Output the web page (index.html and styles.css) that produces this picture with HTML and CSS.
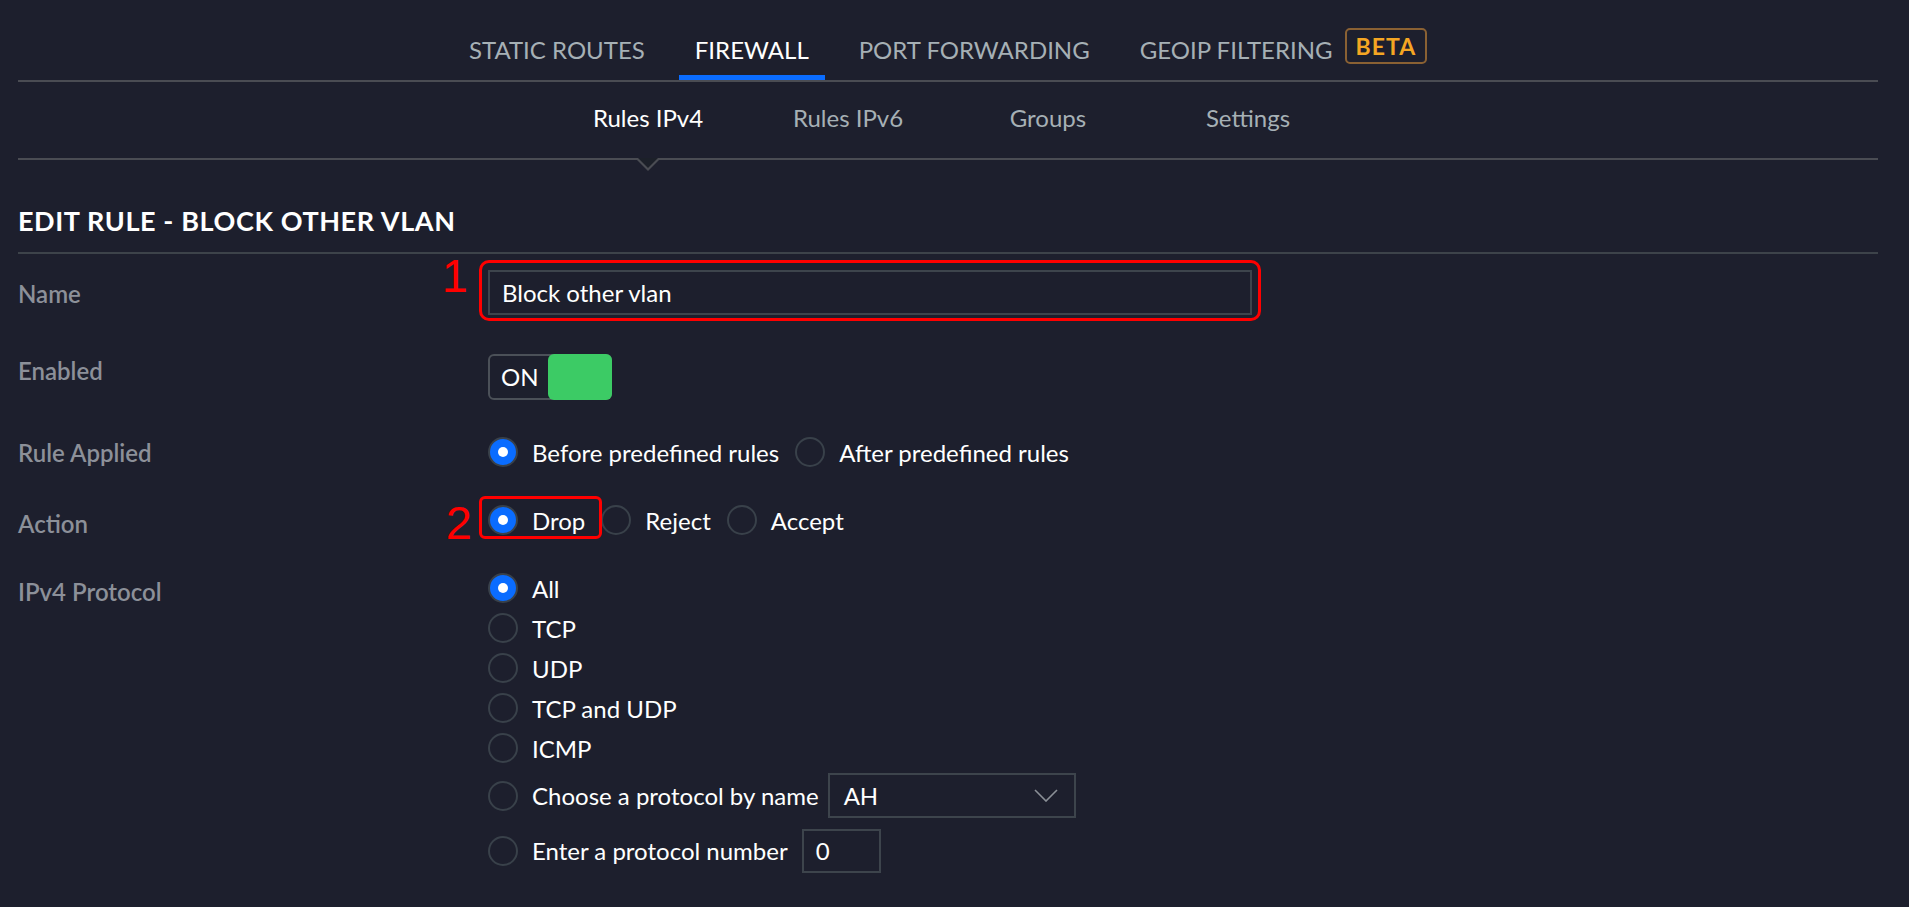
FILE: index.html
```html
<!DOCTYPE html>
<html lang="en">
<head>
  <meta charset="UTF-8">
  <title>Firewall - Edit rule</title>
  <link rel="stylesheet" href="styles.css">
</head>
<body>
  <div class="page">

    <!-- top tabs -->
    <nav class="tabs">
      <div class="tab">STATIC ROUTES</div>
      <div class="tab active">FIREWALL</div>
      <div class="tab">PORT FORWARDING</div>
      <div class="tab">GEOIP FILTERING <span class="beta">BETA</span></div>
    </nav>

    <!-- sub tabs -->
    <nav class="subtabs">
      <div class="subtab active">Rules IPv4</div>
      <div class="subtab">Rules IPv6</div>
      <div class="subtab">Groups</div>
      <div class="subtab">Settings</div>
    </nav>

    <h2 class="title">EDIT RULE - BLOCK OTHER VLAN</h2>

    <div class="form">
      <div class="row row-name">
        <div class="label">Name</div>
        <div class="mark mark-input">
          <span class="mark-num num-1">1</span>
          <div class="textbox">Block other vlan</div>
        </div>
      </div>

      <div class="row row-enabled">
        <div class="label">Enabled</div>
        <div class="toggle">
          <span class="toggle-text">ON</span>
          <span class="toggle-knob"></span>
        </div>
      </div>

      <div class="row row-applied">
        <div class="label">Rule Applied</div>
        <div class="options-inline">
          <div class="option"><span class="radio on"></span>Before predefined rules</div>
          <div class="option"><span class="radio"></span>After predefined rules</div>
        </div>
      </div>

      <div class="row row-action">
        <div class="label">Action</div>
        <div class="options-inline">
          <div class="option mark mark-drop">
            <span class="mark-num num-2">2</span>
            <span class="radio on"></span>Drop
          </div>
          <div class="option"><span class="radio"></span>Reject</div>
          <div class="option"><span class="radio"></span>Accept</div>
        </div>
      </div>

      <div class="row row-protocol">
        <div class="label">IPv4 Protocol</div>
        <div class="options">
          <div class="option"><span class="radio on"></span>All</div>
          <div class="option"><span class="radio"></span>TCP</div>
          <div class="option"><span class="radio"></span>UDP</div>
          <div class="option"><span class="radio"></span>TCP and UDP</div>
          <div class="option"><span class="radio"></span>ICMP</div>
          <div class="option option-tall">
            <span class="radio"></span>Choose a protocol by name
            <div class="select">
              <span>AH</span>
              <svg width="24" height="13" viewBox="0 0 24 13"><path d="M1 1 L12 12 L23 1" fill="none" stroke="#8b9097" stroke-width="1.6"/></svg>
            </div>
          </div>
          <div class="option option-tall">
            <span class="radio"></span>Enter a protocol number
            <div class="number">0</div>
          </div>
        </div>
      </div>
    </div>

  </div>
</body>
</html>
```

FILE: styles.css
```css
body {
  margin: 0;
  background-color: #1d1f2d;
  font-family: Lato, "Open Sans", sans-serif;
  color: #ffffff;
}

.page {
  padding: 0 31px 0 18px;
}

/* top tabs */
.tabs {
  display: flex;
  justify-content: center;
  gap: 18px;
  border-bottom: 2px solid #4a4c53;
}

.tab {
  display: flex;
  align-items: center;
  padding: 36px 16px 11px;
  line-height: 28px;
  font-size: 24px;
  color: #a6b0b5;
  border-bottom: 5px solid transparent;
}

.tab.active {
  color: #ffffff;
  border-bottom-color: #0a6cff;
}

.beta {
  display: flex;
  align-items: center;
  box-sizing: border-box;
  height: 36px;
  margin: -12px 0 -4px 12px;
  padding: 0 9px;
  border: 2px solid #8a6133;
  border-radius: 5px;
  font-size: 23px;
  font-weight: 700;
  letter-spacing: 1px;
  color: #f5a623;
}

/* sub tabs */
.subtabs {
  display: flex;
  justify-content: center;
  border-bottom: 2px solid #4a4c53;
}

.subtab {
  position: relative;
  width: 200px;
  padding: 22px 0 26px;
  line-height: 28px;
  font-size: 24px;
  text-align: center;
  color: #a6b0b5;
}

.subtab.active {
  color: #ffffff;
}

.subtab.active::before,
.subtab.active::after {
  content: "";
  position: absolute;
  top: 100%;
  left: 50%;
  width: 0;
  height: 0;
}

.subtab.active::before {
  margin-left: -13px;
  border-left: 13px solid transparent;
  border-right: 13px solid transparent;
  border-top: 13px solid #4a4c53;
}

.subtab.active::after {
  margin-left: -10px;
  border-left: 10px solid transparent;
  border-right: 10px solid transparent;
  border-top: 10px solid #1c2029;
}

/* heading */
.title {
  margin: 46px 0 0;
  padding-bottom: 16px;
  font-size: 27px;
  font-weight: 700;
  line-height: 30px;
  letter-spacing: 0.6px;
  border-bottom: 2px solid #3d434a;
}

/* form */
.row {
  display: flex;
  align-items: flex-start;
}

.label {
  width: 470px;
  flex-shrink: 0;
  line-height: 30px;
  font-size: 24px;
  font-weight: 600;
  color: #8c9099;
}

.row-name { padding-top: 16px; }
.row-name .label { margin-top: 9px; }

.row-enabled { margin-top: 39px; }
.row-enabled .label { margin-top: 2px; }

.row-applied { margin-top: 37px; }
.row-applied .label { margin-top: 1px; }

.row-action { margin-top: 37px; }
.row-action .label { margin-top: 4px; }

.row-protocol { margin-top: 34px; }
.row-protocol .label { margin-top: 4px; }

.textbox {
  box-sizing: border-box;
  width: 764px;
  height: 45px;
  padding-left: 12px;
  border: 2px solid #3d444c;
  display: flex;
  align-items: center;
  font-size: 24px;
}

.toggle {
  display: flex;
  box-sizing: border-box;
  width: 124px;
  height: 46px;
  border: 2px solid #4b5058;
  border-radius: 6px;
}

.toggle-text {
  flex: 1;
  padding-left: 11px;
  line-height: 42px;
  font-size: 24px;
}

.toggle-knob {
  width: 64px;
  margin: -2px -2px -2px 0;
  background-color: #3ccb65;
  border-radius: 6px;
}

.options {
  display: flex;
  flex-direction: column;
  gap: 10px;
}

.options-inline {
  display: flex;
  gap: 16px;
}

.option {
  display: flex;
  align-items: center;
  height: 30px;
  font-size: 24px;
}

.option-tall {
  height: 45px;
}

.radio {
  display: flex;
  justify-content: center;
  align-items: center;
  box-sizing: border-box;
  width: 30px;
  height: 30px;
  margin-right: 14px;
  border: 2px solid #39414a;
  border-radius: 50%;
}

.radio.on {
  background-color: #0a6cff;
}

.radio.on::after {
  content: "";
  width: 10px;
  height: 10px;
  border-radius: 50%;
  background: #ffffff;
}

.select {
  display: flex;
  justify-content: space-between;
  align-items: center;
  box-sizing: border-box;
  width: 248px;
  height: 45px;
  margin-left: 9px;
  padding: 0 16px 0 14px;
  border: 2px solid #3d444c;
}

.number {
  display: flex;
  align-items: center;
  box-sizing: border-box;
  width: 79px;
  height: 44px;
  margin-left: 14px;
  padding-left: 12px;
  border: 2px solid #3d444c;
}

/* red annotations */
.mark {
  position: relative;
}

.mark::after {
  content: "";
  position: absolute;
  border: 3px solid #ff0000;
  border-radius: 10px;
}

.mark-input::after {
  top: -10px;
  left: -9px;
  right: -9px;
  bottom: -6px;
}

.mark-drop::after {
  top: -9px;
  left: -9px;
  right: -17px;
  bottom: -4px;
  border-radius: 6px;
}

.mark-num {
  position: absolute;
  font-family: "Liberation Sans", Arial, sans-serif;
  font-size: 47px;
  line-height: 47px;
  color: #ff0000;
}

.num-1 {
  top: -18px;
  right: calc(100% + 20px);
}

.num-2 {
  top: -6px;
  right: calc(100% + 16px);
}
```
